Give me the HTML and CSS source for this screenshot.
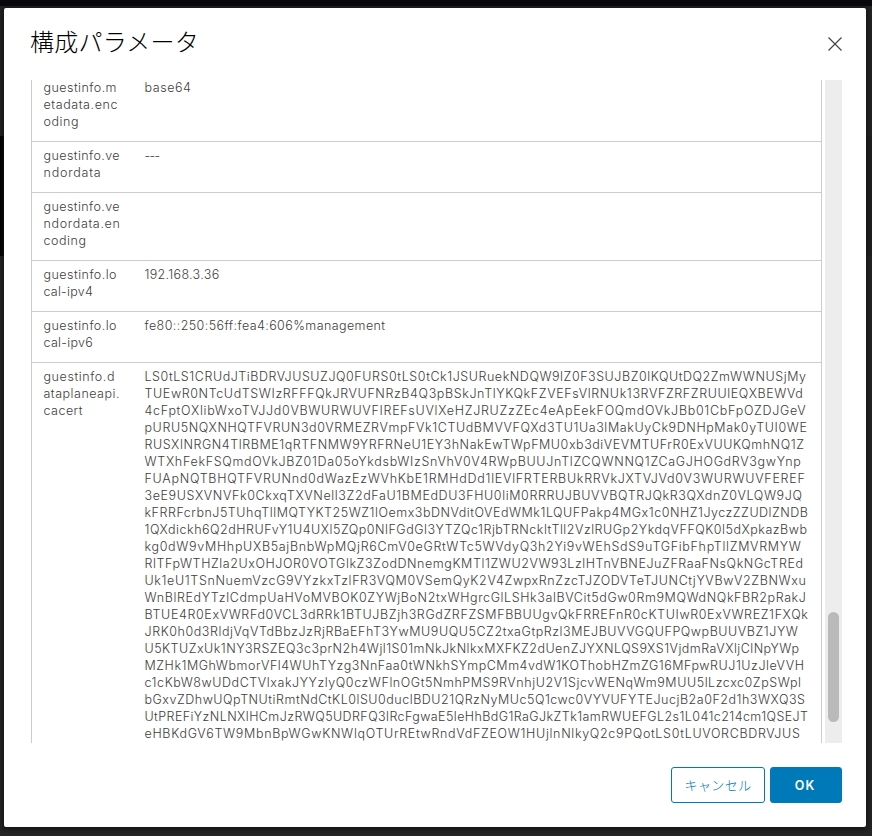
FILE: index.html
```html
<!DOCTYPE html>
<html lang="ja">
<head>
<meta charset="utf-8">
<title>構成パラメータ</title>
<link rel="stylesheet" href="styles.css">
</head>
<body>
<div class="modal">
  <header class="header">
    <h1 class="title" data-width="169">構成パラメータ</h1>
    <button class="close" aria-label="閉じる"><svg width="16" height="16" viewBox="0 0 16 16"><path d="M1.5 1.5 14.5 14.5M14.5 1.5 1.5 14.5"/></svg></button>
  </header>
  <div class="body">
    <div class="table">
      <div class="row">
        <div class="name"><span data-width="73.5">guestinfo.m</span><span data-width="74.5">etadata.enc</span><span data-width="35.5">oding</span></div>
        <div class="value"><span data-width="47">base64</span></div>
      </div>
      <div class="row">
        <div class="name"><span data-width="76.5">guestinfo.ve</span><span data-width="58">ndordata</span></div>
        <div class="value"><span data-width="15">---</span></div>
      </div>
      <div class="row">
        <div class="name"><span data-width="76.5">guestinfo.ve</span><span data-width="77">ndordata.en</span><span data-width="43">coding</span></div>
        <div class="value"></div>
      </div>
      <div class="row">
        <div class="name"><span data-width="73.5">guestinfo.lo</span><span data-width="49.5">cal-ipv4</span></div>
        <div class="value"><span data-width="75">192.168.3.36</span></div>
      </div>
      <div class="row">
        <div class="name"><span data-width="73.5">guestinfo.lo</span><span data-width="49.5">cal-ipv6</span></div>
        <div class="value"><span data-width="241">fe80::250:56ff:fea4:606%management</span></div>
      </div>
      <div class="row">
        <div class="name"><span data-width="71.5">guestinfo.d</span><span data-width="76.5">ataplaneapi.</span><span data-width="39.5">cacert</span></div>
        <div class="value">
          <span data-width="662">LS0tLS1CRUdJTiBDRVJUSUZJQ0FURS0tLS0tCk1JSURuekNDQW9lZ0F3SUJBZ0lKQUtDQ2ZmWWNUSjMy</span>
          <span data-width="659">TUEwR0NTcUdTSWIzRFFFQkJRVUFNRzB4Q3pBSkJnTlYKQkFZVEFsVlRNUk13RVFZRFZRUUlEQXBEWVd</span>
          <span data-width="662">4cFptOXlibWxoTVJJd0VBWURWUVFIREFsUVlXeHZJRUZzZEc4eApEekFOQmdOVkJBb01CbFpOZDJGeV</span>
          <span data-width="663">pURU5NQXNHQTFVRUN3d0VRMEZRVmpFVk1CTUdBMVVFQXd3TU1Ua3lMakUyCk9DNHpMak0yTUI0WE</span>
          <span data-width="660">RUSXlNRGN4TlRBME1qRTFNMW9YRFRNeU1EY3hNakEwTWpFMU0xb3diVEVMTUFrR0ExVUUKQmhNQ1Z</span>
          <span data-width="657">WTXhFekFSQmdOVkJBZ01Da05oYkdsbWIzSnVhV0V4RWpBUUJnTlZCQWNNQ1ZCaGJHOGdRV3gwYnp</span>
          <span data-width="661">FUApNQTBHQTFVRUNnd0dWazEzWVhKbE1RMHdDd1lEVlFRTERBUkRRVkJXTVJVd0V3WURWUVFEREF</span>
          <span data-width="658">3eE9USXVNVFk0CkxqTXVNell3Z2dFaU1BMEdDU3FHU0liM0RRRUJBUVVBQTRJQkR3QXdnZ0VLQW9JQ</span>
          <span data-width="664">kFRRFcrbnJ5TUhqTllMQTYKT25WZ1lOemx3bDNVditOVEdWMk1LQUFPakp4MGx1c0NHZ1JyczZZUDlZNDB</span>
          <span data-width="663">1QXdickh6Q2dHRUFvY1U4UXl5ZQp0NlFGdGl3YTZQc1RjbTRNckltTll2VzlRUGp2YkdqVFFQK0l5dXpkazBwb</span>
          <span data-width="657">kg0dW9vMHhpUXB5ajBnbWpMQjR6CmV0eGRtWTc5WVdyQ3h2Yi9vWEhSdS9uTGFibFhpTllZMVRMYW</span>
          <span data-width="659">RlTFpWTHZla2UxOHJOR0VOTGlkZ3ZodDNnemgKMTl1ZWU2VW93LzlHTnVBNEJuZFRaaFNsQkNGcTREd</span>
          <span data-width="662">Uk1eU1TSnNuemVzcG9VYzkxTzlFR3VQM0VSemQyK2V4ZwpxRnZzcTJZODVTeTJUNCtjYVBwV2ZBNWxu</span>
          <span data-width="662">WnBlREdYTzlCdmpUaHVoMVBOK0ZYWjBoN2txWHgrcGlLSHk3alBVCit5dGw0Rm9MQWdNQkFBR2pRakJ</span>
          <span data-width="664">BTUE4R0ExVWRFd0VCL3dRRk1BTUJBZjh3RGdZRFZSMFBBUUgvQkFRREFnR0cKTUIwR0ExVWREZ1FXQk</span>
          <span data-width="654">JRK0h0d3RldjVqVTdBbzJzRjRBaEFhT3YwMU9UQU5CZ2txaGtpRzl3MEJBUVVGQUFPQwpBUUVBZ1JYW</span>
          <span data-width="655">U5KTUZxUk1NY3RSZEQ3c3prN2h4Wjl1S01mNkJkNlkxMXFKZ2dUenZJYXNLQS9XS1VjdmRaVXljClNpYWp</span>
          <span data-width="660">MZHk1MGhWbmorVFl4WUhTYzg3NnFaa0tWNkhSYmpCMm4vdW1KOThobHZmZG16MFpwRUJ1UzJleVVH</span>
          <span data-width="657">c1cKbW8wUDdCTVlxakJYYzlyQ0czWFlnOGt5NmhPMS9RVnhjU2V1SjcvWENqWm9MUU5lLzcxc0ZpSWpl</span>
          <span data-width="661">bGxvZDhwUQpTNUtiRmtNdCtKL0lSU0duclBDU21QRzNyMUc5Q1cwc0VYVUFYTEJucjB2a0F2d1h3WXQ3S</span>
          <span data-width="664">UtPREFiYzNLNXlHCmJzRWQ5UDRFQ3lRcFgwaE5leHhBdG1RaGJkZTk1amRWUEFGL2s1L041c214cm1QSEJT</span>
          <span data-width="656">eHBKdGV6TW9MbnBpWGwKNWlqOTUrREtwRndVdFZEOW1HUjlnNlkyQ2c9PQotLS0tLUVORCBDRVJUS</span>
          <span>&nbsp;</span>
        </div>
      </div>
    </div>
    <div class="track"><div class="thumb"></div></div>
  </div>
  <footer class="footer">
    <button class="btn cancel"><span data-width="67">キャンセル</span></button>
    <button class="btn ok">OK</button>
  </footer>
</div>
<script src="fit.js"></script>
</body>
</html>
```
FILE: styles.css
```css
* { box-sizing: border-box; }
body {
  margin: 0;
  height: 836px;
  padding: 8px 6px 9px 4px;
  overflow: hidden;
  background: linear-gradient(#08090d 0 6px, #232323 6px 136px, transparent 136px),
    linear-gradient(90deg, #000 0 4px, #202020 4px) 0 0 / 100% 256px no-repeat,
    #242424;
  font-family: Inter, "Noto Sans CJK JP", sans-serif;
  font-size: 12.5px;
  font-weight: 300;
  color: #404040;
}
.modal {
  display: flex;
  flex-direction: column;
  height: 819px;
  padding: 0 24px 24px 27px;
  background: #fff;
  border-radius: 2px;
  box-shadow: 0 1px 5px 1px #111;
}
.header {
  display: flex;
  justify-content: space-between;
  align-items: flex-start;
  height: 72px;
  padding-top: 17px;
}
.title {
  margin: 0 0 0 -1px;
  font: 300 24px/32px "Noto Sans CJK JP", sans-serif;
  color: #000;
  white-space: nowrap;
}
.close {
  display: flex;
  width: 16px;
  height: 16px;
  margin-top: 11px;
  margin-right: -1px;
  padding: 0;
  border: 0;
  background: none;
}
.close svg { fill: none; stroke: #444; stroke-width: 1.2; }
.body {
  display: flex;
  justify-content: space-between;
  height: 663px;
  overflow: hidden;
}
.table {
  width: 791px;
  height: 680px;
  margin-top: -6px;
  border: solid #ccc;
  border-width: 0 1px;
}
.row {
  display: grid;
  grid-template-columns: 101px 1fr;
  padding: 5px 0 11px 11.5px;
  line-height: 17px;
  border-bottom: 1px solid #ccc;
}
.row span { display: block; width: max-content; white-space: nowrap; }
.track {
  width: 17px;
  height: 663px;
  padding: 532px 3px 0;
  background: #ededed;
}
.thumb { height: 110px; border-radius: 6px; background: #bababa; }
.footer {
  display: flex;
  justify-content: flex-end;
  gap: 5px;
  padding-top: 24px;
}
.btn {
  display: flex;
  align-items: center;
  justify-content: center;
  height: 36px;
  padding: 0;
  border: 1px solid #0079b8;
  border-radius: 3px;
  font: 300 13px "Noto Sans CJK JP", sans-serif;
}
.cancel { width: 94px; padding-bottom: 2px; background: #fff; color: #0079b8; }
.cancel span { white-space: nowrap; }
.ok {
  width: 72px;
  padding-right: 2px;
  background: #0079b8;
  color: #fff;
  font: 600 12.5px Inter, sans-serif;
  letter-spacing: 1px;
}
```
FILE: fit.js
```js
document.querySelectorAll('[data-width]').forEach(function (line) {
  var natural = line.getBoundingClientRect().width;
  var count = line.textContent.length;
  line.style.letterSpacing = (Number(line.dataset.width) - natural) / count + 'px';
});
```
